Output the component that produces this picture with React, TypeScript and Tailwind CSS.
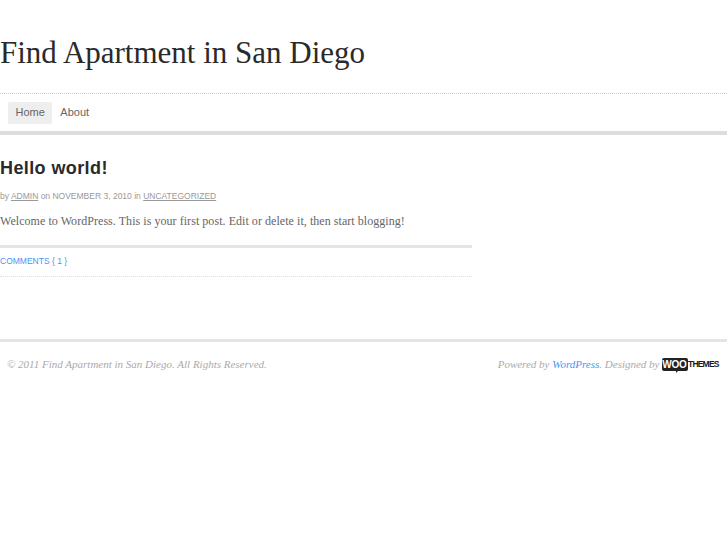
export default function App() {
  const sans = "font-['Liberation_Sans',Arial,sans-serif]";
  const serif = "font-['Liberation_Serif','Times_New_Roman',serif]";
  return (
    <div className={`w-[727px] h-[545px] overflow-hidden bg-white ${sans}`}>
      <header className="h-[93px] pt-[36px]">
        <h1 className={`${serif} text-[31px] leading-[34px] text-[#2a2a2a] font-normal`}>Find Apartment in San Diego</h1>
      </header>
      <div className="border-t border-dotted border-[#ccc]" />
      <nav className="h-[37px] flex items-center pl-[8px] gap-[8px] text-[11px] text-[#666]">
        <a className="h-[22px] px-[7.5px] bg-[#eee] rounded-[2px] flex items-center">Home</a>
        <a className="flex items-center">About</a>
      </nav>
      <div className="h-[4px] bg-[#ddd]" />
      <main className="w-[472px] pt-[22px]">
        <h2 className="text-[18px] leading-[22px] font-bold text-[#2a2a2a] tracking-[0.4px]">Hello world!</h2>
        <p className="mt-[11px] text-[8.5px] leading-[12px] text-[#999]">
          by <span className="underline">ADMIN</span> on NOVEMBER 3, 2010 in <span className="underline">UNCATEGORIZED</span>
        </p>
        <p className={`${serif} mt-[10px] text-[12px] leading-[18px] text-[#666] tracking-[0.05px]`}>
          Welcome to WordPress. This is your first post. Edit or delete it, then start blogging!
        </p>
        <div className="mt-[15px] border-t-[3px] border-[#e5e5e5]" />
        <div className="h-[28px] pb-[2px] flex items-center text-[8.5px] text-[#4b94f5]">
          COMMENTS { "{" } 1 { "}" }
        </div>
        <div className="border-t border-dotted border-[#ddd]" />
      </main>
      <footer className="mt-[62px] border-t-[3px] border-[#e5e5e5] flex justify-between items-center pl-[7px] pr-[8px] pt-[15px]">
        <p className={`${serif} italic text-[11px] leading-[14px] text-[#aaa]`}>© 2011 Find Apartment in San Diego. All Rights Reserved.</p>
        <div className="flex items-center gap-[2px]">
          <p className={`${serif} italic text-[11px] leading-[14px] text-[#aaa]`}>
            Powered by <span className="text-[#4b94f5]">WordPress</span>. Designed by
          </p>
          <div className="flex items-center h-[14px] text-[#1a1a1a] font-bold">
            <span className="relative w-[26px] h-[13px] bg-[#222] rounded-[2px] text-white text-[10px] leading-[13px] text-center tracking-[-0.2px]">WOO
              <span className="absolute left-[14px] top-[12px] border-t-[3px] border-t-[#222] border-r-[3px] border-r-transparent" />
            </span>
            <span className="text-[8.5px] leading-[13px] ml-[0.5px] tracking-[-0.8px] w-[31px] whitespace-nowrap">THEMES</span>
          </div>
        </div>
      </footer>
    </div>
  );
}
